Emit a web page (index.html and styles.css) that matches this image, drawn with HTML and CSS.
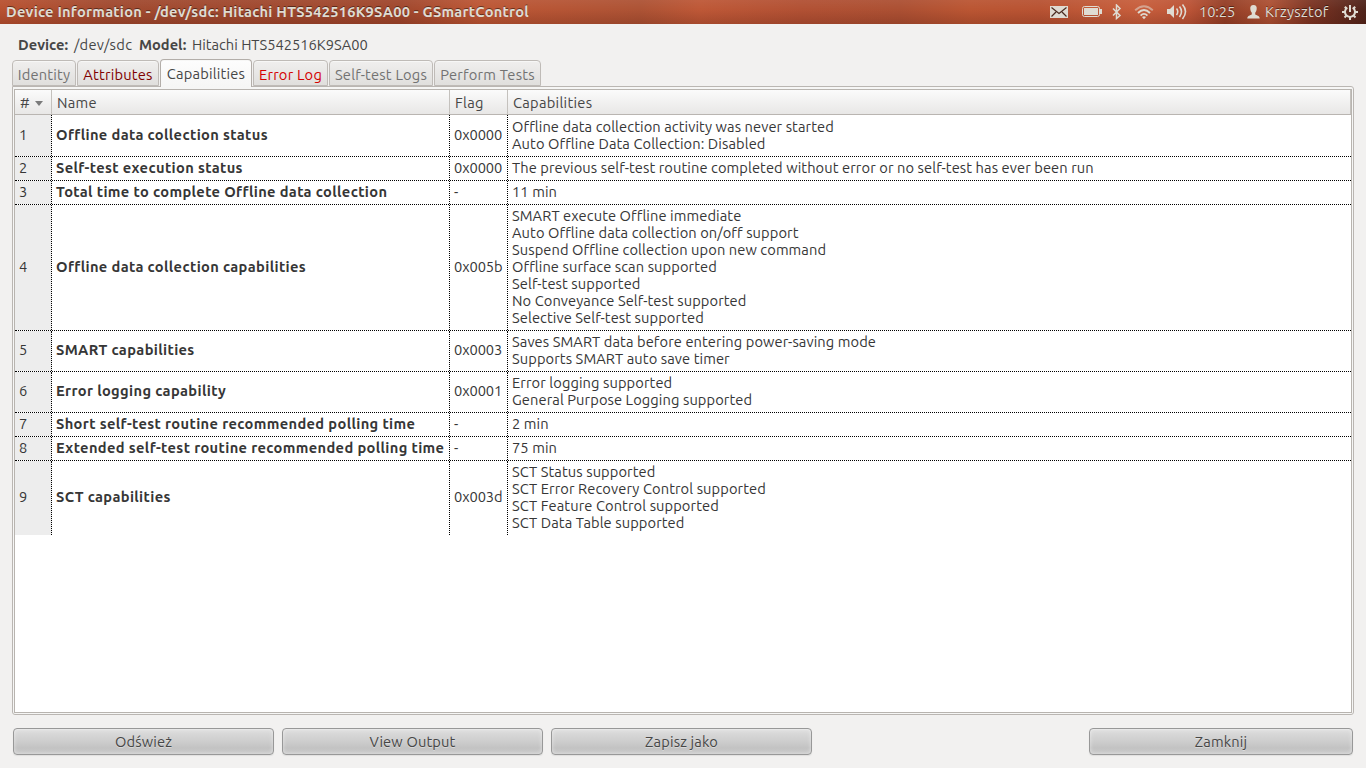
FILE: index.html
```html
<!DOCTYPE html>
<html lang="pl">
<head>
    <meta charset="UTF-8">
    <title>Device Information - /dev/sdc: Hitachi HTS542516K9SA00 - GSmartControl</title>
    <link rel="stylesheet" href="styles.css">
</head>
<body>
    <header class="panel">
        <h1>Device Information - /dev/sdc: Hitachi HTS542516K9SA00 - GSmartControl</h1>
        <div class="indicators">
            <svg class="mail" width="20" height="16" viewBox="0 0 20 16">
                <rect x="1" y="2" width="18" height="12" fill="#dfdbd2"/>
                <path d="M2.500 3.500l7.500 6 7.500-6M2.500 12.500l4.500-4.500M17.500 12.500l-4.500-4.500" fill="none" stroke="#4a2a1f" stroke-width="1.200"/>
            </svg>
            <svg class="battery" width="22" height="16" viewBox="0 0 22 16">
                <rect x="1.500" y="2.500" width="17" height="10" rx="2" fill="none" stroke="#dfdbd2"/>
                <rect x="3" y="4" width="14" height="7" fill="#dfdbd2"/>
                <path d="M19 5h2v5h-2z" fill="#dfdbd2"/>
            </svg>
            <svg class="bluetooth" width="10" height="16" viewBox="0 0 10 16">
                <path d="M1 4.500l7 7-3.500 3V1L8 4.500l-7 7" fill="none" stroke="#dfdbd2" stroke-width="1.500"/>
            </svg>
            <svg class="wifi" width="20" height="16" viewBox="0 0 20 16">
                <g fill="none" stroke-width="1.900">
                    <path d="M1.200 6.200Q10-1.800 18.800 6.200" stroke="#dfdbd2" opacity=".55"/>
                    <path d="M4 9Q10 3.200 16 9" stroke="#dfdbd2"/>
                    <path d="M6.600 11.600Q10 8.200 13.400 11.600" stroke="#dfdbd2"/>
                </g>
                <path d="M8 13q2-1.500 4 0l-2 2.300z" fill="#dfdbd2"/>
            </svg>
            <svg class="volume" width="20" height="16" viewBox="0 0 20 16">
                <path d="M0 5h3l4-4v13l-4-4H0z" fill="#dfdbd2"/>
                <path d="M9.500 4.500q2.500 3 0 6.500M12.500 2.500q4 5 0 10.500M15.500.5q6 7 0 14.500" fill="none" stroke="#dfdbd2" stroke-width="1.600"/>
            </svg>
            <span class="clock">10:25</span>
            <svg class="person" width="13" height="14" viewBox="0 0 13 14">
                <path d="M6.500 0C3.800 0 3 1.800 3.300 4c.2 1.800.8 3 1.500 3.800v1.400C4 10.500.3 10.200.3 13.500h12.400c0-3.300-3.700-3-4.500-4.300V7.800C8.900 7 9.500 5.800 9.700 4 10 1.800 9.200 0 6.500 0z" fill="#dfdbd2"/>
            </svg>
            <span class="user">Krzysztof</span>
            <svg class="session" width="16" height="16" viewBox="0 0 16 16">
                <g fill="none" stroke="#dfdbd2" stroke-width="2">
                    <path d="M5.300 3.700a5 5 0 1 0 5.400 0"/>
                    <path d="M8 1v7"/>
                    <path d="M2.800 2.800l1.700 1.700M13.200 2.800l-1.700 1.700M0 8h3M13 8h3M2.500 13.500l2-2M13.500 13.500l-2-2M8 13v3"/>
                </g>
            </svg>
        </div>
    </header>

    <main class="window">
        <p class="device"><b class="device-label">Device:</b><span class="path">/dev/sdc</span><b class="model-label">Model:</b><span>Hitachi HTS542516K9SA00</span></p>

        <nav class="tabs">
            <div class="tab identity">Identity</div>
            <div class="tab attributes">Attributes</div>
            <div class="tab capabilities active">Capabilities</div>
            <div class="tab errors">Error Log</div>
            <div class="tab selftest">Self-test Logs</div>
            <div class="tab perform">Perform Tests</div>
        </nav>

        <section class="notebook">
            <div class="list">
                <div class="row head">
                    <div># <i class="sort"></i></div>
                    <div>Name</div>
                    <div>Flag</div>
                    <div>Capabilities</div>
                </div>
                <div class="row first">
                    <div class="num">1</div>
                    <div class="name">Offline data collection status</div>
                    <div class="flag">0x0000</div>
                    <div class="caps">Offline data collection activity was never started<br>Auto Offline Data Collection: Disabled</div>
                </div>
                <div class="row">
                    <div class="num">2</div>
                    <div class="name">Self-test execution status</div>
                    <div class="flag">0x0000</div>
                    <div class="caps">The previous self-test routine completed without error or no self-test has ever been run</div>
                </div>
                <div class="row">
                    <div class="num">3</div>
                    <div class="name">Total time to complete Offline data collection</div>
                    <div class="flag">-</div>
                    <div class="caps">11 min</div>
                </div>
                <div class="row">
                    <div class="num">4</div>
                    <div class="name">Offline data collection capabilities</div>
                    <div class="flag">0x005b</div>
                    <div class="caps">SMART execute Offline immediate<br>Auto Offline data collection on/off support<br>Suspend Offline collection upon new command<br>Offline surface scan supported<br>Self-test supported<br>No Conveyance Self-test supported<br>Selective Self-test supported</div>
                </div>
                <div class="row">
                    <div class="num">5</div>
                    <div class="name">SMART capabilities</div>
                    <div class="flag">0x0003</div>
                    <div class="caps">Saves SMART data before entering power-saving mode<br>Supports SMART auto save timer</div>
                </div>
                <div class="row">
                    <div class="num">6</div>
                    <div class="name">Error logging capability</div>
                    <div class="flag">0x0001</div>
                    <div class="caps">Error logging supported<br>General Purpose Logging supported</div>
                </div>
                <div class="row">
                    <div class="num">7</div>
                    <div class="name">Short self-test routine recommended polling time</div>
                    <div class="flag">-</div>
                    <div class="caps">2 min</div>
                </div>
                <div class="row">
                    <div class="num">8</div>
                    <div class="name">Extended self-test routine recommended polling time</div>
                    <div class="flag">-</div>
                    <div class="caps">75 min</div>
                </div>
                <div class="row">
                    <div class="num">9</div>
                    <div class="name">SCT capabilities</div>
                    <div class="flag">0x003d</div>
                    <div class="caps">SCT Status supported<br>SCT Error Recovery Control supported<br>SCT Feature Control supported<br>SCT Data Table supported</div>
                </div>
            </div>
        </section>

        <div class="actions">
            <button>Odśwież</button>
            <button>View Output</button>
            <button>Zapisz jako</button>
            <button class="close">Zamknij</button>
        </div>
    </main>
</body>
</html>
```

FILE: styles.css
```css
* {
    box-sizing: border-box;
}
body {
    margin: 0;
    height: 768px;
    display: flex;
    flex-direction: column;
    overflow: hidden;
    background: #f2f1f0;
    color: #464646;
    font: 14.667px/17px Ubuntu, "Noto Sans", sans-serif;
    white-space: nowrap;
}

/* top panel */
.panel {
    height: 24px;
    flex: none;
    display: flex;
    align-items: center;
    justify-content: space-between;
    padding-left: 6px;
    color: #dfdbd2;
    text-shadow: 0 -1px 0 rgba(0, 0, 0, .45);
    background:
        linear-gradient(rgba(255, 255, 255, .05), transparent 40%, rgba(60, 10, 0, .18)),
        linear-gradient(90deg, #b95231 0, #a14a30 110px, #a0472d 400px, #bd5735 480px, #b65535 560px, #ad5335 640px, #be5837 700px, #b25134 800px, #ac5033 900px, #bb5633 970px, #b85333 1040px, #c85f3d 1140px, #bb5437 1190px, #943f27 1225px, #ad5134 1270px, #7d3524 1310px, #4f241b 1366px);
}
.panel h1 {
    margin: 0;
    font-size: 14.667px;
    line-height: 24px;
    letter-spacing: .22px;
}
.indicators {
    width: 317px;
    flex: none;
    display: flex;
    align-items: center;
}
.battery {
    margin-left: 12px;
}
.bluetooth {
    margin-left: 9px;
}
.wifi {
    margin-left: 12px;
}
.volume {
    margin-left: 13px;
}
.clock {
    width: 37px;
    margin-left: 12px;
    padding-bottom: 2px;
    letter-spacing: -.1px;
}
.person {
    margin-left: 11px;
}
.user {
    width: 65px;
    margin-left: 5px;
    padding-bottom: 2px;
    letter-spacing: .25px;
}
.session {
    margin-left: 12px;
}

/* window contents */
.window {
    flex: 1;
    display: flex;
    flex-direction: column;
    padding: 12px 12px 13px;
}
.device {
    display: flex;
    height: 18px;
    margin: 0 6px 5px;
    line-height: 18px;
}
.device-label {
    width: 56px;
}
.path {
    width: 65px;
    letter-spacing: .3px;
}
.model-label {
    width: 53px;
}

/* notebook tabs */
.tabs {
    position: relative;
    z-index: 1;
    display: flex;
    align-items: flex-end;
    height: 28px;
    margin-bottom: -1px;
    padding-bottom: 1px;
    letter-spacing: .2px;
}
.tab {
    height: 26px;
    margin-right: 1px;
    padding-top: 5px;
    border: 1px solid #bfbbb7;
    border-radius: 4px 4px 0 0;
    background: linear-gradient(#f0efee, #e0dfdd);
    box-shadow: inset 0 1px #f7f7f6;
    color: #727272;
    line-height: 18px;
    text-align: center;
}
.tab.active {
    height: 28px;
    margin-bottom: -1px;
    border-color: #b3aea9;
    border-bottom: 0;
    background: linear-gradient(#fdfdfd, #f6f6f5);
    color: #464646;
}
.tab.identity {
    width: 64px;
}
.tab.attributes {
    width: 82px;
    color: #800000;
}
.tab.capabilities {
    width: 92px;
}
.tab.errors {
    width: 75px;
    color: #d40000;
}
.tab.selftest {
    width: 104px;
}
.tab.perform {
    width: 107px;
}

/* capabilities table */
.notebook {
    flex: 1;
    width: 1342px;
    padding: 2px 1px 1px;
    border: 1px solid #bab6b2;
    border-radius: 0 3px 3px 3px;
    background: #f6f6f5;
}
.list {
    height: 100%;
    border: 1px solid #b8b4af;
    background: #fff;
    color: #363636;
}
.row {
    display: grid;
    grid-template-columns: 37px 398px 58px 1fr;
    border-bottom: 1px dotted #000;
}
.row > div {
    display: flex;
    align-items: center;
    padding: 1.6px 4px 4.4px;
    border-right: 1px dotted #000;
}
.row > div:last-child {
    border-right: 0;
}
.row:last-child {
    border-bottom: 0;
}
.row > .num {
    background: #ededed;
}
.row > .name {
    font-weight: bold;
    letter-spacing: .36px;
}
.row > .flag {
    letter-spacing: -.1px;
}
.row > .caps {
    display: block;
    padding: 2px 4px 4px;
    letter-spacing: .09px;
}
.row.first > .caps {
    padding-top: 3px;
}
.row.head {
    height: 25px;
    border-bottom: 1px solid #b9b5b1;
    background: linear-gradient(#fbfbfb, #e8e7e6);
    color: #464646;
    letter-spacing: .28px;
}
.row.head > div {
    padding: 1px 5px 0;
    border-right: 1px solid #c4c1bd;
}
.sort {
    margin: 2px 0 0 5px;
    border: 4px solid transparent;
    border-top: 5px solid #7b7b7b;
    border-bottom: 0;
}

/* bottom buttons */
.actions {
    display: flex;
    gap: 8px;
    margin: 13px 1px 0;
}
.actions button {
    width: 261px;
    height: 27px;
    padding: 0;
    border: 1px solid #989898;
    border-radius: 4px;
    background: linear-gradient(#dedede, #cdcdcd 50%, #c3c3c3 75%, #c9c9c9);
    box-shadow: inset 0 1px #e8e8e8, inset 0 0 4px rgba(255, 255, 255, .5), 0 1px 1px #e0dfde;
    color: #464646;
    font: inherit;
    letter-spacing: .15px;
    text-shadow: 0 1px rgba(255, 255, 255, .4);
}
.actions .close {
    width: 264px;
    margin-left: auto;
}
```
